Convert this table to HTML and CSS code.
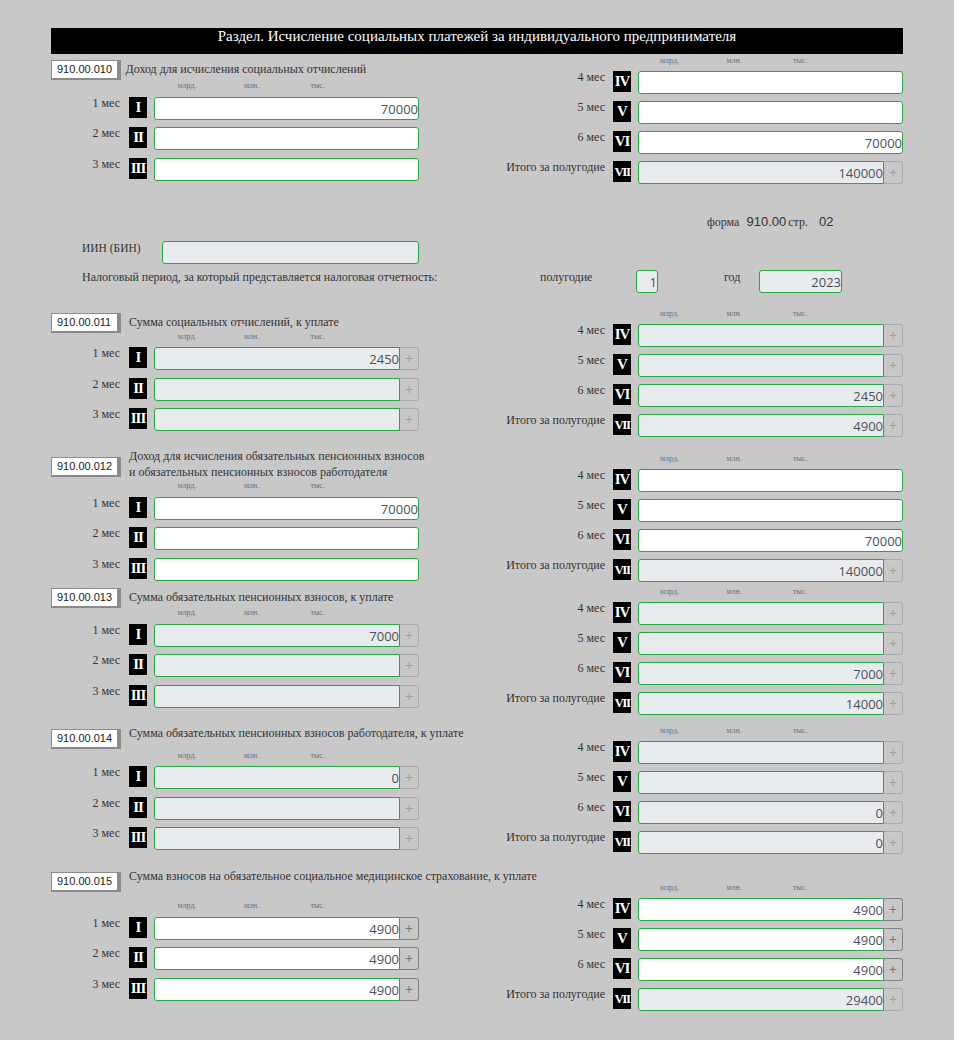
FILE: index.html
```html
<!DOCTYPE html>
<html lang="ru">
<head>
<meta charset="utf-8">
<title>910.00 — Раздел. Исчисление социальных платежей</title>
<link rel="stylesheet" href="styles.css">
</head>
<body>
<div class="page">
  <div class="titlebar">Раздел. Исчисление социальных платежей за индивидуального предпринимателя</div>

  <!-- 910.00.010 -->
  <section class="sec s010">
    <div class="left">
      <div class="head"><span class="code">910.00.010</span><span class="ttl">Доход для исчисления социальных отчислений</span></div>
      <div class="units"><span>млрд.</span><span>млн.</span><span>тыс.</span></div>
      <div class="rows">
        <div class="row"><span class="lbl">1 мес</span><span class="num">I</span><div class="field"><div class="box">70000</div></div></div>
        <div class="row"><span class="lbl">2 мес</span><span class="num">II</span><div class="field"><div class="box"></div></div></div>
        <div class="row"><span class="lbl">3 мес</span><span class="num">III</span><div class="field"><div class="box"></div></div></div>
      </div>
    </div>
    <div class="right">
      <div class="units"><span>млрд.</span><span>млн.</span><span>тыс.</span></div>
      <div class="rows">
        <div class="row"><span class="lbl">4 мес</span><span class="num">IV</span><div class="field"><div class="box"></div></div></div>
        <div class="row"><span class="lbl">5 мес</span><span class="num">V</span><div class="field"><div class="box"></div></div></div>
        <div class="row"><span class="lbl">6 мес</span><span class="num">VI</span><div class="field"><div class="box">70000</div></div></div>
        <div class="row"><span class="lbl">Итого за полугодие</span><span class="num narrow">VII</span><div class="field"><div class="box ro">140000</div><span class="plus">+</span></div></div>
      </div>
    </div>
  </section>

  <div class="forma"><span class="fw">форма</span><span class="fn">910.00</span><span class="fs">стр.</span><span class="fp">02</span></div>
  <div class="iin"><span class="iin-lbl">ИИН (БИН)</span><div class="box ro iin-box"></div></div>
  <div class="period">
    <span class="per-lbl">Налоговый период, за который представляется налоговая отчетность:</span>
    <span class="half-lbl">полугодие</span>
    <div class="box ro half-box">1</div>
    <span class="year-lbl">год</span>
    <div class="box ro year-box">2023</div>
  </div>

  <!-- 910.00.011 -->
  <section class="sec s011">
    <div class="left">
      <div class="head"><span class="code">910.00.011</span><span class="ttl">Сумма социальных отчислений, к уплате</span></div>
      <div class="units"><span>млрд.</span><span>млн.</span><span>тыс.</span></div>
      <div class="rows">
        <div class="row"><span class="lbl">1 мес</span><span class="num">I</span><div class="field"><div class="box ro">2450</div><span class="plus">+</span></div></div>
        <div class="row"><span class="lbl">2 мес</span><span class="num">II</span><div class="field"><div class="box ro"></div><span class="plus">+</span></div></div>
        <div class="row"><span class="lbl">3 мес</span><span class="num">III</span><div class="field"><div class="box ro"></div><span class="plus">+</span></div></div>
      </div>
    </div>
    <div class="right">
      <div class="units"><span>млрд.</span><span>млн.</span><span>тыс.</span></div>
      <div class="rows">
        <div class="row"><span class="lbl">4 мес</span><span class="num">IV</span><div class="field"><div class="box ro"></div><span class="plus">+</span></div></div>
        <div class="row"><span class="lbl">5 мес</span><span class="num">V</span><div class="field"><div class="box ro"></div><span class="plus">+</span></div></div>
        <div class="row"><span class="lbl">6 мес</span><span class="num">VI</span><div class="field"><div class="box ro">2450</div><span class="plus">+</span></div></div>
        <div class="row"><span class="lbl">Итого за полугодие</span><span class="num narrow">VII</span><div class="field"><div class="box ro">4900</div><span class="plus">+</span></div></div>
      </div>
    </div>
  </section>

  <!-- 910.00.012 -->
  <section class="sec s012">
    <div class="left">
      <div class="head"><span class="code">910.00.012</span><span class="ttl">Доход для исчисления обязательных пенсионных взносов<br>и обязательных пенсионных взносов работодателя</span></div>
      <div class="units"><span>млрд.</span><span>млн.</span><span>тыс.</span></div>
      <div class="rows">
        <div class="row"><span class="lbl">1 мес</span><span class="num">I</span><div class="field"><div class="box">70000</div></div></div>
        <div class="row"><span class="lbl">2 мес</span><span class="num">II</span><div class="field"><div class="box"></div></div></div>
        <div class="row"><span class="lbl">3 мес</span><span class="num">III</span><div class="field"><div class="box"></div></div></div>
      </div>
    </div>
    <div class="right">
      <div class="units"><span>млрд.</span><span>млн.</span><span>тыс.</span></div>
      <div class="rows">
        <div class="row"><span class="lbl">4 мес</span><span class="num">IV</span><div class="field"><div class="box"></div></div></div>
        <div class="row"><span class="lbl">5 мес</span><span class="num">V</span><div class="field"><div class="box"></div></div></div>
        <div class="row"><span class="lbl">6 мес</span><span class="num">VI</span><div class="field"><div class="box">70000</div></div></div>
        <div class="row"><span class="lbl">Итого за полугодие</span><span class="num narrow">VII</span><div class="field"><div class="box ro">140000</div><span class="plus">+</span></div></div>
      </div>
    </div>
  </section>

  <!-- 910.00.013 -->
  <section class="sec s013">
    <div class="left">
      <div class="head"><span class="code">910.00.013</span><span class="ttl">Сумма обязательных пенсионных взносов, к уплате</span></div>
      <div class="units"><span>млрд.</span><span>млн.</span><span>тыс.</span></div>
      <div class="rows">
        <div class="row"><span class="lbl">1 мес</span><span class="num">I</span><div class="field"><div class="box ro">7000</div><span class="plus">+</span></div></div>
        <div class="row"><span class="lbl">2 мес</span><span class="num">II</span><div class="field"><div class="box ro"></div><span class="plus">+</span></div></div>
        <div class="row"><span class="lbl">3 мес</span><span class="num">III</span><div class="field"><div class="box ro"></div><span class="plus">+</span></div></div>
      </div>
    </div>
    <div class="right">
      <div class="units"><span>млрд.</span><span>млн.</span><span>тыс.</span></div>
      <div class="rows">
        <div class="row"><span class="lbl">4 мес</span><span class="num">IV</span><div class="field"><div class="box ro"></div><span class="plus">+</span></div></div>
        <div class="row"><span class="lbl">5 мес</span><span class="num">V</span><div class="field"><div class="box ro"></div><span class="plus">+</span></div></div>
        <div class="row"><span class="lbl">6 мес</span><span class="num">VI</span><div class="field"><div class="box ro">7000</div><span class="plus">+</span></div></div>
        <div class="row"><span class="lbl">Итого за полугодие</span><span class="num narrow">VII</span><div class="field"><div class="box ro">14000</div><span class="plus">+</span></div></div>
      </div>
    </div>
  </section>

  <!-- 910.00.014 -->
  <section class="sec s014">
    <div class="left">
      <div class="head"><span class="code">910.00.014</span><span class="ttl">Сумма обязательных пенсионных взносов работодателя, к уплате</span></div>
      <div class="units"><span>млрд.</span><span>млн.</span><span>тыс.</span></div>
      <div class="rows">
        <div class="row"><span class="lbl">1 мес</span><span class="num">I</span><div class="field"><div class="box ro">0</div><span class="plus">+</span></div></div>
        <div class="row"><span class="lbl">2 мес</span><span class="num">II</span><div class="field"><div class="box ro"></div><span class="plus">+</span></div></div>
        <div class="row"><span class="lbl">3 мес</span><span class="num">III</span><div class="field"><div class="box ro"></div><span class="plus">+</span></div></div>
      </div>
    </div>
    <div class="right">
      <div class="units"><span>млрд.</span><span>млн.</span><span>тыс.</span></div>
      <div class="rows">
        <div class="row"><span class="lbl">4 мес</span><span class="num">IV</span><div class="field"><div class="box ro"></div><span class="plus">+</span></div></div>
        <div class="row"><span class="lbl">5 мес</span><span class="num">V</span><div class="field"><div class="box ro"></div><span class="plus">+</span></div></div>
        <div class="row"><span class="lbl">6 мес</span><span class="num">VI</span><div class="field"><div class="box ro">0</div><span class="plus">+</span></div></div>
        <div class="row"><span class="lbl">Итого за полугодие</span><span class="num narrow">VII</span><div class="field"><div class="box ro">0</div><span class="plus">+</span></div></div>
      </div>
    </div>
  </section>

  <!-- 910.00.015 -->
  <section class="sec s015">
    <div class="left">
      <div class="head"><span class="code">910.00.015</span><span class="ttl">Сумма взносов на обязательное социальное медицинское страхование, к уплате</span></div>
      <div class="units"><span>млрд.</span><span>млн.</span><span>тыс.</span></div>
      <div class="rows">
        <div class="row"><span class="lbl">1 мес</span><span class="num">I</span><div class="field"><div class="box">4900</div><span class="plus on">+</span></div></div>
        <div class="row"><span class="lbl">2 мес</span><span class="num">II</span><div class="field"><div class="box">4900</div><span class="plus on">+</span></div></div>
        <div class="row"><span class="lbl">3 мес</span><span class="num">III</span><div class="field"><div class="box">4900</div><span class="plus on">+</span></div></div>
      </div>
    </div>
    <div class="right">
      <div class="units"><span>млрд.</span><span>млн.</span><span>тыс.</span></div>
      <div class="rows">
        <div class="row"><span class="lbl">4 мес</span><span class="num">IV</span><div class="field"><div class="box">4900</div><span class="plus on">+</span></div></div>
        <div class="row"><span class="lbl">5 мес</span><span class="num">V</span><div class="field"><div class="box">4900</div><span class="plus on">+</span></div></div>
        <div class="row"><span class="lbl">6 мес</span><span class="num">VI</span><div class="field"><div class="box">4900</div><span class="plus on">+</span></div></div>
        <div class="row"><span class="lbl">Итого за полугодие</span><span class="num narrow">VII</span><div class="field"><div class="box ro">29400</div><span class="plus">+</span></div></div>
      </div>
    </div>
  </section>
</div>
</body>
</html>
```

FILE: styles.css
```css
html, body {
  margin: 0;
  padding: 0;
  background: #c8c8c8;
}
body {
  font-family: "Liberation Serif", "Times New Roman", serif;
  font-size: 12px;
  color: #333;
}
.page {
  width: 852px;
  margin-left: 51px;
  padding-top: 28px;
  padding-bottom: 30px;
}
.titlebar {
  height: 26px;
  background: #000;
  color: #fff;
  font-size: 15px;
  line-height: 16px;
  text-align: center;
}

/* sections */
.sec {
  display: grid;
  grid-template-columns: 430px 422px;
  align-items: start;
}
.left, .right {
  display: flex;
  flex-direction: column;
}
.head {
  display: flex;
  align-items: flex-start;
  height: 20px;
}
.code {
  box-sizing: border-box;
  width: 70px;
  height: 20px;
  flex: none;
  background: #fff;
  border: 1px solid #8c8c8c;
  border-right: 4px solid #8a8a8a;
  border-bottom: 2px solid #8a8a8a;
  font-family: "Liberation Sans", Arial, sans-serif;
  font-size: 11px;
  line-height: 17px;
  color: #222;
  padding-left: 5px;
  white-space: nowrap;
}
.ttl {
  margin-left: 8px;
  margin-top: 1px;
  line-height: 16px;
  white-space: nowrap;
  color: #333;
}
.units {
  height: 10px;
  line-height: 10px;
  font-size: 8px;
  color: #6c6c6c;
  white-space: nowrap;
  margin-bottom: 5px;
}
.units span {
  display: inline-block;
  width: 66.5px;
}
.left .units {
  padding-left: 126.5px;
  margin-bottom: 5.5px;
}
.right .units {
  padding-left: 179px;
}
.rows {
  display: flex;
  flex-direction: column;
}
.left .rows { gap: 7.5px; }
.right .rows { gap: 7px; }
.row {
  display: flex;
  align-items: flex-start;
  height: 23px;
}
.lbl {
  text-align: right;
  line-height: 12px;
  white-space: nowrap;
  color: #333;
}
.left .lbl { width: 69px; margin-right: 9px; }
.right .lbl { width: 124px; margin-right: 8px; }
.num {
  flex: none;
  width: 18px;
  height: 21px;
  background: #000;
  color: #fff;
  font-weight: bold;
  font-size: 15px;
  line-height: 21px;
  letter-spacing: -1px;
  text-align: center;
  white-space: nowrap;
  margin-right: 7px;
}
.num.narrow {
  font-size: 13px;
  letter-spacing: -1.5px;
}
.field {
  display: flex;
  width: 265px;
  height: 23px;
  flex: none;
}
.box {
  box-sizing: border-box;
  flex: 1;
  height: 23px;
  background: #fff;
  border: 1px solid #28a745;
  border-radius: 3px;
  font-family: "Open Sans", "Liberation Sans", sans-serif;
  font-size: 13px;
  line-height: 23px;
  color: #495057;
  text-align: right;
  padding-right: 0;
  overflow: hidden;
  white-space: nowrap;
}
.box.ro {
  background: #e9ecef;
}
.field .box:not(:last-child) {
  border-top-right-radius: 0;
  border-bottom-right-radius: 0;
}
.plus {
  box-sizing: border-box;
  flex: none;
  width: 19px;
  height: 23px;
  border: 1px solid #a9acaf;
  border-left: none;
  border-radius: 0 3px 3px 0;
  color: #9a9da1;
  font-family: "Open Sans", "Liberation Sans", sans-serif;
  font-size: 14px;
  line-height: 21px;
  text-align: center;
}
.plus.on {
  border-color: #7e8286;
  color: #6c757d;
}

/* section vertical placement */
.s010 { margin-top: 2px; }
.s010 .left { margin-top: 3.5px; }
.s010 .ttl { margin-left: 4.5px; }
.s010 .left .units { margin-top: 1.7px; }

.s011 { margin-top: 16px; }
.s011 .left { margin-top: 4px; }
.s011 .left .units { margin-top: -1.2px; }

.s012 { margin-top: 11px; }
.s012 .head { height: 32px; }
.s012 .code { margin-top: 9.3px; }
.s012 .ttl { margin-top: 0; }
.s012 .left .units { margin-top: 1.2px; }
.s012 .right { margin-top: 6px; }

.s013 { margin-top: 4.7px; }
.s013 .left { margin-top: 1.3px; }
.s013 .left .units { margin-top: 0.5px; }

.s014 { margin-top: 10px; }
.s014 .head { height: 24px; }
.s014 .code { margin-top: 4px; }
.s014 .ttl { margin-top: 0; }
.s014 .left .units { margin-top: 2.1px; }
.s014 .right { margin-top: 1.3px; }

.s015 { margin-top: 14px; }
.s015 .head { height: 23.7px; }
.s015 .code { margin-top: 3.7px; }
.s015 .ttl { margin-top: 0; }
.s015 .left .units { margin-top: 9.5px; }
.s015 .right { margin-top: 14.7px; }

/* middle block */
.forma {
  display: flex;
  align-items: baseline;
  margin-top: 30px;
  padding-left: 656px;
  height: 16px;
  line-height: 16px;
  white-space: nowrap;
  color: #333;
}
.fn, .fp {
  font-family: "Liberation Sans", Arial, sans-serif;
  font-size: 13px;
  color: #333;
}
.fn { margin-left: 7px; }
.fs { margin-left: 2px; }
.fp { margin-left: 11px; }

.iin {
  display: flex;
  align-items: flex-start;
  margin-top: 11px;
  padding-left: 31px;
  height: 23px;
}
.iin-lbl {
  width: 80px;
  line-height: 14px;
  font-size: 11.5px;
  white-space: nowrap;
}
.iin-box {
  flex: none;
  width: 257px;
}
.period {
  display: flex;
  align-items: flex-start;
  margin-top: 6px;
  padding-left: 31px;
  height: 23px;
}
.per-lbl {
  width: 458px;
  line-height: 14px;
  white-space: nowrap;
}
.half-lbl {
  width: 96px;
  line-height: 14px;
}
.half-box {
  flex: none;
  width: 22px;
}
.year-lbl {
  margin-left: 66px;
  width: 35px;
  line-height: 14px;
}
.year-box {
  flex: none;
  width: 83px;
}
```
